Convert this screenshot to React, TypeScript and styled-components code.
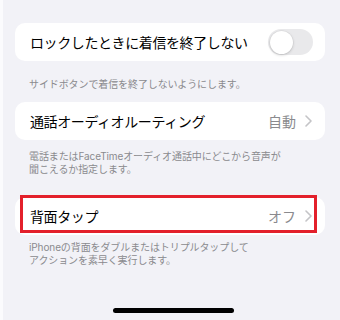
import React from "react";
import styled, { createGlobalStyle } from "styled-components";

const GlobalStyle = createGlobalStyle`
  html, body {
    margin: 0;
    padding: 0;
    background: #f2f2f7;
  }
  body {
    font-family: Inter, "Noto Sans CJK JP", sans-serif;
    -webkit-font-smoothing: antialiased;
  }
`;

const Screen = styled.div`
  width: 340px;
  height: 320px;
  box-sizing: border-box;
  background: #f2f2f7;
  border-left: 3px solid #fbfbfd;
  padding: 23px 15px 0 12px;
  display: flex;
  flex-direction: column;
  position: relative;
  overflow: hidden;
`;

const Section = styled.section<{ $gap: number }>`
  display: flex;
  flex-direction: column;
  margin-bottom: ${(p) => p.$gap}px;
`;

const Card = styled.div<{ $marked?: boolean }>`
  position: relative;
  height: 38px;
  background: #ffffff;
  border-radius: 10px;
  display: flex;
  align-items: center;
  padding: 0 13px 0 15px;

  ${(p) =>
    p.$marked &&
    `
    &::after {
      content: "";
      position: absolute;
      left: 5px;
      right: 8px;
      top: -2px;
      bottom: 2px;
      border: 3px solid #e3202b;
      pointer-events: none;
    }
  `}
`;

const Label = styled.span`
  flex: 1;
  font-size: 14px;
  letter-spacing: -0.4px;
  color: #000000;
  white-space: nowrap;
`;

const Value = styled.span`
  font-size: 14px;
  color: #8a8a8e;
  margin-right: 9px;
`;

const Caption = styled.p<{ $top: number }>`
  margin: 0;
  padding: ${(p) => p.$top}px 15px 0 14px;
  font-size: 10px;
  line-height: 13.5px;
  color: #8a8a8e;
  letter-spacing: -0.1px;
`;

const Track = styled.div`
  width: 45px;
  height: 26px;
  border-radius: 13px;
  background: #e9e9eb;
  position: relative;
  margin-right: -1px;
`;

const Knob = styled.div`
  position: absolute;
  top: 1.5px;
  left: 1.5px;
  width: 23px;
  height: 23px;
  border-radius: 50%;
  background: #ffffff;
  box-shadow: 0 1px 3px rgba(0, 0, 0, 0.18), 0 0 0 0.5px rgba(0, 0, 0, 0.06);
`;

const HomeIndicator = styled.div`
  position: absolute;
  left: 110px;
  bottom: 7px;
  width: 121px;
  height: 5px;
  border-radius: 3px;
  background: #000000;
`;

const Chevron = () => (
  <svg width="7" height="12" viewBox="0 0 7 12" fill="none">
    <path
      d="M1 1l5 5-5 5"
      stroke="#c4c4c7"
      strokeWidth="1.6"
      strokeLinecap="round"
      strokeLinejoin="round"
    />
  </svg>
);

export default function App() {
  return (
    <>
      <GlobalStyle />
      <Screen>
        <Section $gap={10}>
          <Card>
            <Label>ロックしたときに着信を終了しない</Label>
            <Track>
              <Knob />
            </Track>
          </Card>
          <Caption $top={17}>サイドボタンで着信を終了しないようにします。</Caption>
        </Section>
        <Section $gap={20}>
          <Card>
            <Label>通話オーディオルーティング</Label>
            <Value>自動</Value>
            <Chevron />
          </Card>
          <Caption $top={10}>
            電話またはFaceTimeオーディオ通話中にどこから音声が
            <br />
            聞こえるか指定します。
          </Caption>
        </Section>
        <Section $gap={0}>
          <Card $marked>
            <Label>背面タップ</Label>
            <Value>オフ</Value>
            <Chevron />
          </Card>
          <Caption $top={6}>
            iPhoneの背面をダブルまたはトリプルタップして
            <br />
            アクションを素早く実行します。
          </Caption>
        </Section>
        <HomeIndicator />
      </Screen>
    </>
  );
}
